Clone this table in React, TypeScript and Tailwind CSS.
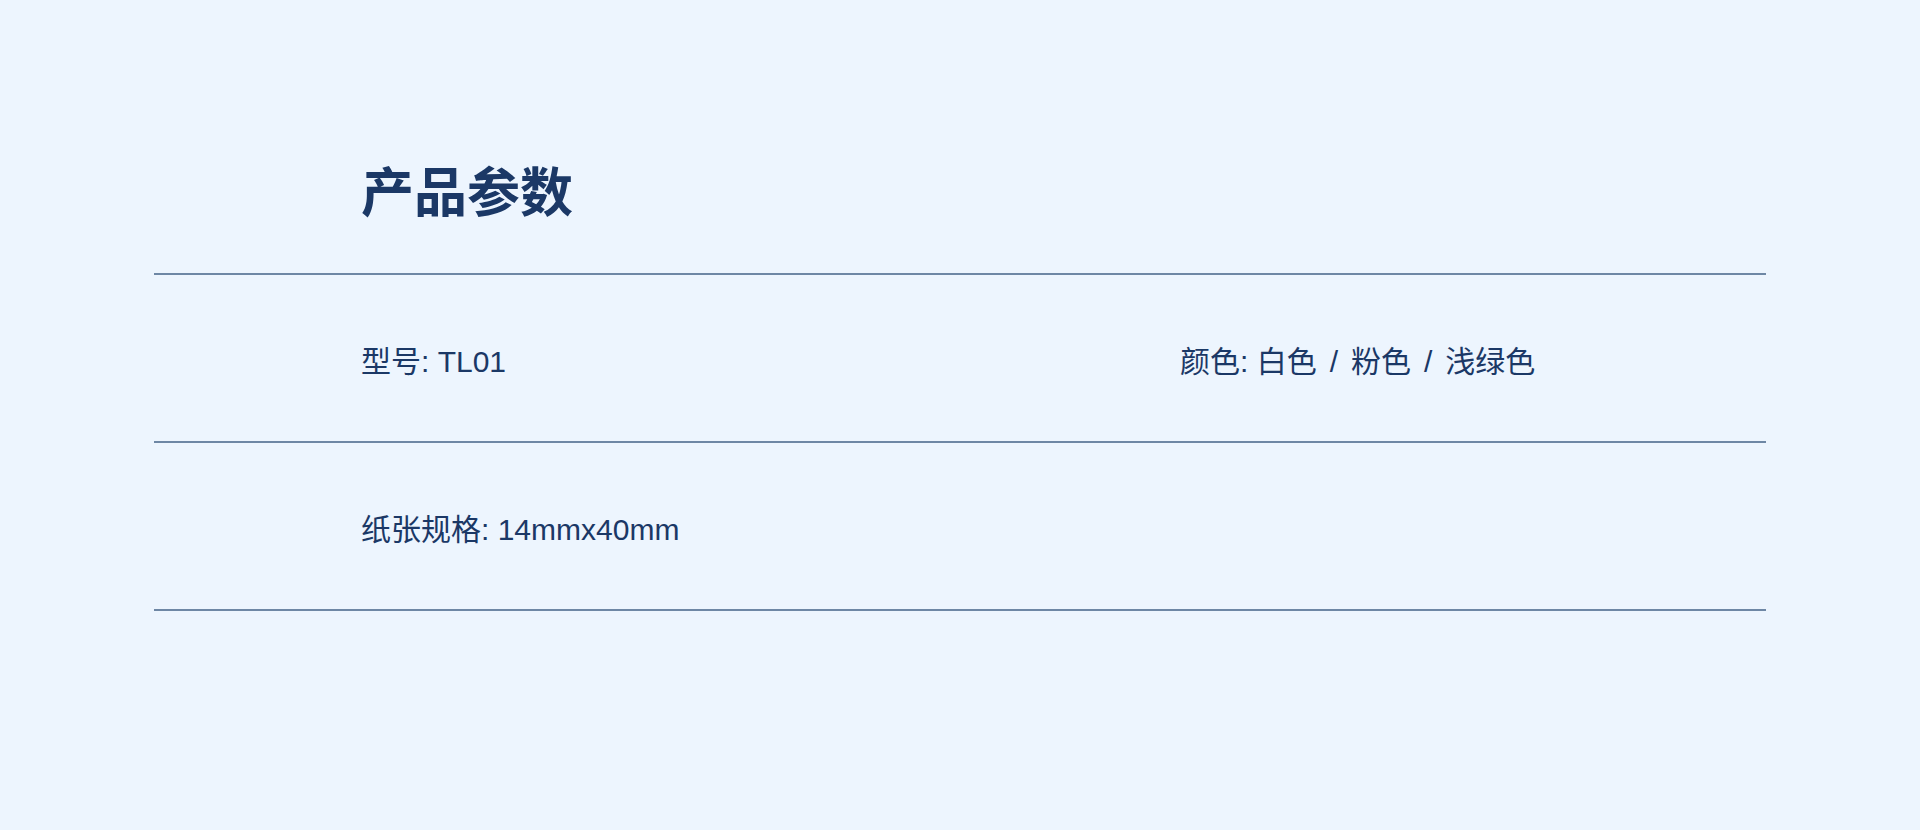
const specs = [
    [
        { label: "型号", value: "TL01" },
        { label: "颜色", value: ["白色", "粉色", "浅绿色"] },
    ],
    [{ label: "纸张规格", value: "14mmx40mm" }],
];

function Value({ value }: { value: string | string[] }) {
    if (typeof value === "string") return <span>{value}</span>;
    return (
        <span>
            {value.map((v, i) => (
                <span key={v}>
                    {i > 0 && <span className="mx-[13px]">/</span>}
                    {v}
                </span>
            ))}
        </span>
    );
}

export default function App() {
    return (
        <div
            className="min-h-screen w-full bg-[#edf5fe] pt-[167px] text-[#1b3866]"
            style={{ fontFamily: '"Liberation Sans", "Noto Sans CJK SC", sans-serif' }}
        >
            <div className="mx-auto w-[1612px]">
                <h1 className="mb-[53px] pl-[207px] text-[53px] font-bold leading-[53px]">产品参数</h1>
                <div className="h-[2px] bg-[#6e87a5]" />
                {specs.map((row, i) => (
                    <div key={i}>
                        <div className="flex h-[166px] items-center pl-[207px] pt-[7px] text-[30px] leading-none">
                            {row.map((item, j) => (
                                <div key={item.label} className={j === 0 ? "w-[819px]" : ""}>
                                    {item.label}: <Value value={item.value} />
                                </div>
                            ))}
                        </div>
                        <div className="h-[2px] bg-[#6e87a5]" />
                    </div>
                ))}
            </div>
        </div>
    );
}
